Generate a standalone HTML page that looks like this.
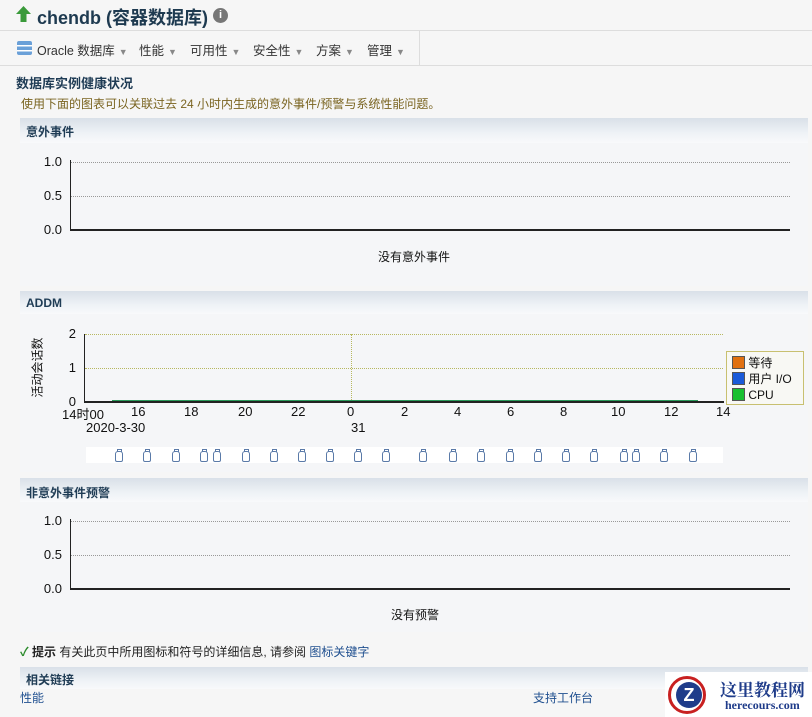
<!DOCTYPE html><html><head><meta charset="utf-8"><style>
body{margin:0;width:812px;height:717px;overflow:hidden;background:#f6f6f6;font-family:"Liberation Sans","Noto Sans CJK SC",sans-serif;font-size:12px;color:#333;position:relative}
.a{position:absolute;white-space:nowrap}
.hdr{position:absolute;left:20px;width:788px;background:linear-gradient(#d9e0e8,#eef2f6 60%,#f8f9fb);}
.hdr b{position:absolute;left:6px;color:#1f3c55;font-size:12px}
.body{position:absolute;left:20px;width:788px;background:#f5f6f8}
.dot{position:absolute;border-top:1px dotted #999}
.gd{position:absolute;border-top:1px dotted #b8b860}
.lab{position:absolute;font-size:13px;color:#111;text-align:right;width:30px}
.ic{position:absolute;top:4px;width:6px;height:9px;border:1px solid #5a7aa8;border-radius:3px 3px 2px 2px}
.ic:before{content:"";position:absolute;left:1px;top:-3px;width:3px;height:2px;border:1px solid #5a7aa8;border-bottom:none}
.m{position:absolute;top:40px;font-size:12.5px;color:#333}
.m i{font-style:normal;color:#888;font-size:9px;margin-left:4px}
</style></head><body>
<svg class="a" style="left:15px;top:5px" width="17" height="18"><path d="M8.5 1 L16 9 H11.5 V17 H5.5 V9 H1Z" fill="#3a9a3a"/></svg>
<div class="a" style="left:37px;top:4px;font-size:18px;font-weight:bold;color:#1e3a50">chendb (容器数据库)</div>
<div class="a" style="left:213px;top:8px;width:15px;height:15px;border-radius:50%;background:#777;color:#fff;font-size:11px;font-weight:bold;text-align:center;line-height:15px">i</div>
<div class="a" style="left:0;top:30px;width:812px;border-top:1px solid #ddd"></div>
<div class="a" style="left:0;top:65px;width:812px;border-top:1px solid #ddd"></div>
<div class="a" style="left:419px;top:31px;height:34px;border-left:1px solid #ddd"></div>
<div class="a" style="left:17px;top:41px;width:15px;height:14px;background:linear-gradient(#6aa0d8 0 30%,#fff 30% 38%,#6aa0d8 38% 66%,#fff 66% 74%,#6aa0d8 74%);border-radius:2px"></div>
<span class="m" style="left:37px">Oracle 数据库<i>▼</i></span>
<span class="m" style="left:139px">性能<i>▼</i></span>
<span class="m" style="left:190px">可用性<i>▼</i></span>
<span class="m" style="left:253px">安全性<i>▼</i></span>
<span class="m" style="left:316px">方案<i>▼</i></span>
<span class="m" style="left:367px">管理<i>▼</i></span>
<div class="a" style="left:16px;top:73px;font-size:13px;font-weight:bold;color:#1f3c55">数据库实例健康状况</div>
<div class="a" style="left:21px;top:95px;font-size:12px;color:#7a6420">使用下面的图表可以关联过去 24 小时内生成的意外事件/预警与系统性能问题。</div>

<div class="hdr" style="top:118px;height:25px"><b style="top:5px">意外事件</b></div>
<div class="body" style="top:143px;height:143px"></div>
<div class="lab" style="left:32px;top:154px">1.0</div><div class="lab" style="left:32px;top:188px">0.5</div><div class="lab" style="left:32px;top:222px">0.0</div>
<div class="dot" style="left:70px;top:162px;width:720px"></div><div class="dot" style="left:70px;top:196px;width:720px"></div>
<div class="a" style="left:70px;top:229px;width:720px;border-top:2px solid #222"></div>
<div class="a" style="left:70px;top:160px;height:70px;border-left:1px solid #222"></div>
<div class="a" style="left:378px;top:248px;font-size:12px;color:#111">没有意外事件</div>

<div class="hdr" style="top:291px;height:23px"><b style="top:5px">ADDM</b></div>
<div class="body" style="top:314px;height:158px"></div>
<div class="a" style="left:6px;top:359px;width:62px;text-align:center;font-size:12px;color:#111;transform:rotate(-90deg)">活动会话数</div>
<div class="lab" style="left:46px;top:326px;width:30px">2</div><div class="lab" style="left:46px;top:360px">1</div><div class="lab" style="left:46px;top:394px">0</div>
<div class="gd" style="left:85px;top:334px;width:638px"></div><div class="gd" style="left:85px;top:368px;width:638px"></div>
<div class="a" style="left:351px;top:334px;height:68px;border-left:1px dotted #b8b860"></div>
<div class="a" style="left:84px;top:334px;height:69px;border-left:1px solid #222"></div>
<div class="a" style="left:84px;top:401px;width:640px;border-top:2px solid #222"></div>
<div class="a" style="left:112px;top:400px;width:586px;border-top:1px solid #2a9a5a"></div>
<div class="a" style="left:62px;top:404px;font-size:13px;color:#111">14时00</div>
<div class="a" style="left:0;top:404px;font-size:13px;color:#111">
<span class="a" style="left:131px">16</span><span class="a" style="left:184px">18</span><span class="a" style="left:238px">20</span><span class="a" style="left:291px">22</span><span class="a" style="left:347px">0</span><span class="a" style="left:401px">2</span><span class="a" style="left:454px">4</span><span class="a" style="left:507px">6</span><span class="a" style="left:560px">8</span><span class="a" style="left:611px">10</span><span class="a" style="left:664px">12</span><span class="a" style="left:716px">14</span></div>
<div class="a" style="left:86px;top:420px;font-size:13px;color:#111">2020-3-30</div>
<div class="a" style="left:351px;top:420px;font-size:13px;color:#111">31</div>
<div class="a" style="left:726px;top:351px;width:76px;height:52px;border:1px solid #c8c070;background:#f8f8f4;font-size:12px;color:#111;line-height:16px">
<div style="padding:3px 0 0 5px"><span style="display:inline-block;width:11px;height:11px;background:#e07010;border:1px solid #555;vertical-align:-2px"></span> 等待<br><span style="display:inline-block;width:11px;height:11px;background:#1a5ad8;border:1px solid #555;vertical-align:-2px"></span> 用户 I/O<br><span style="display:inline-block;width:11px;height:11px;background:#18c030;border:1px solid #555;vertical-align:-2px"></span> CPU</div></div>
<div class="a" style="left:86px;top:447px;width:637px;height:16px;background:#fff">
<span class="ic" style="left:29px"></span><span class="ic" style="left:57px"></span><span class="ic" style="left:86px"></span><span class="ic" style="left:114px"></span><span class="ic" style="left:127px"></span><span class="ic" style="left:156px"></span><span class="ic" style="left:184px"></span><span class="ic" style="left:212px"></span><span class="ic" style="left:240px"></span><span class="ic" style="left:268px"></span><span class="ic" style="left:296px"></span><span class="ic" style="left:333px"></span><span class="ic" style="left:363px"></span><span class="ic" style="left:391px"></span><span class="ic" style="left:420px"></span><span class="ic" style="left:448px"></span><span class="ic" style="left:476px"></span><span class="ic" style="left:504px"></span><span class="ic" style="left:534px"></span><span class="ic" style="left:546px"></span><span class="ic" style="left:574px"></span><span class="ic" style="left:603px"></span></div>

<div class="hdr" style="top:478px;height:24px"><b style="top:6px">非意外事件预警</b></div>
<div class="body" style="top:502px;height:130px"></div>
<div class="lab" style="left:32px;top:513px">1.0</div><div class="lab" style="left:32px;top:547px">0.5</div><div class="lab" style="left:32px;top:581px">0.0</div>
<div class="dot" style="left:70px;top:521px;width:720px"></div><div class="dot" style="left:70px;top:555px;width:720px"></div>
<div class="a" style="left:70px;top:588px;width:720px;border-top:2px solid #222"></div>
<div class="a" style="left:70px;top:519px;height:70px;border-left:1px solid #222"></div>
<div class="a" style="left:391px;top:606px;font-size:12px;color:#111">没有预警</div>

<div class="a" style="left:20px;top:643px;font-size:12px;color:#222"><span style="color:#2a8a2a;font-weight:bold">✓</span> <b>提示</b> 有关此页中所用图标和符号的详细信息, 请参阅 <span style="color:#1f4f8f">图标关键字</span></div>
<div class="hdr" style="top:667px;height:22px"><b style="top:4px">相关链接</b></div>
<div class="a" style="left:20px;top:689px;font-size:12px;color:#1f4f8f">性能</div>
<div class="a" style="left:533px;top:689px;font-size:12px;color:#1f4f8f">支持工作台</div>
<div class="a" style="left:665px;top:672px;width:147px;height:45px;background:#fff"></div>
<div class="a" style="left:668px;top:676px;width:38px;height:38px;border-radius:50%;border:3px solid #c82020;box-sizing:border-box"></div>
<div class="a" style="left:676px;top:682px;width:26px;height:26px;border-radius:50%;background:#1f3c8a;color:#fff;font-weight:bold;font-size:18px;text-align:center;line-height:26px">Z</div>
<div class="a" style="left:720px;top:676px;font-family:'Noto Serif CJK SC',serif;font-weight:bold;font-size:17px;color:#1f3c8a">这里教程网</div>
<div class="a" style="left:725px;top:698px;font-family:'Liberation Serif',serif;font-weight:bold;font-size:12px;color:#1f3c8a">herecours.com</div>
</body></html>
